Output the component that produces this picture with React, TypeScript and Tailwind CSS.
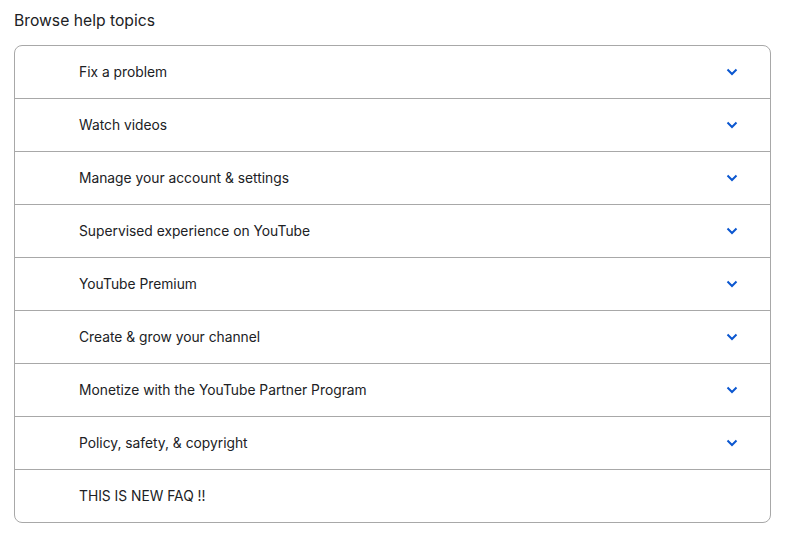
import React from 'react';

const topics = [
  { title: 'Fix a problem', expandable: true },
  { title: 'Watch videos', expandable: true },
  { title: 'Manage your account & settings', expandable: true },
  { title: 'Supervised experience on YouTube', expandable: true },
  { title: 'YouTube Premium', expandable: true },
  { title: 'Create & grow your channel', expandable: true },
  { title: 'Monetize with the YouTube Partner Program', expandable: true },
  { title: 'Policy, safety, & copyright', expandable: true },
  { title: 'THIS IS NEW FAQ !!', expandable: false },
];

const Chevron = () => (
  <svg width="12" height="8" viewBox="0 0 12 8" className="text-[#0b57d0]">
    <path d="M1.5 1.5 L6 6 L10.5 1.5" fill="none" stroke="currentColor" strokeWidth="2" />
  </svg>
);

export default function App() {
  return (
    <div className="bg-white w-[787px] h-[550px] px-[14px] pt-[10px] font-['Inter','Noto_Sans',sans-serif] text-[#202124]">
      <h2 className="text-[15.7px] leading-[22px] mb-[13px]">Browse help topics</h2>
      <div className="w-[757px] border border-[#a8a8a8] rounded-[8px] overflow-hidden divide-y divide-[#a8a8a8]">
        {topics.map((t) => (
          <div key={t.title} className="box-content h-[52px] flex items-center pl-[64px] pr-[32px]">
            <span className="flex-1 text-[13.8px]">{t.title}</span>
            {t.expandable && <Chevron />}
          </div>
        ))}
      </div>
    </div>
  );
}
